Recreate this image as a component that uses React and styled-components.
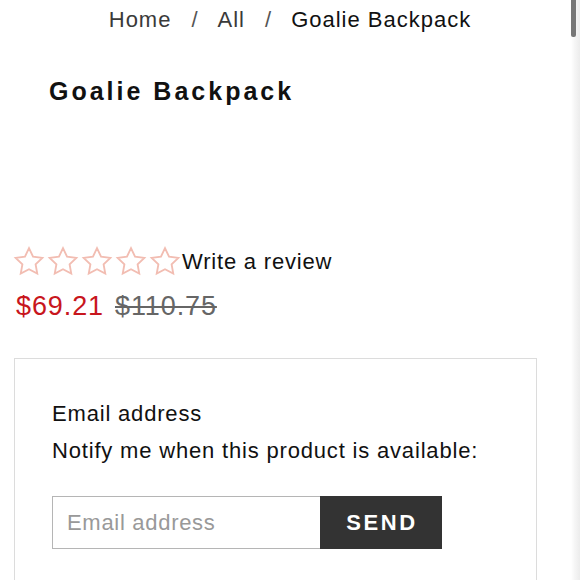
import React from "react";
import styled, { createGlobalStyle } from "styled-components";

const Global = createGlobalStyle`
  html, body { margin: 0; padding: 0; background: #fff; }
  body {
    font-family: "Liberation Sans", Arial, sans-serif;
    color: #111;
    overflow: hidden;
  }
`;

const Page = styled.div`
  width: 580px;
  height: 580px;
  overflow: hidden;
  position: relative;
`;

const Crumbs = styled.nav`
  display: flex;
  justify-content: center;
  align-items: center;
  padding-top: 7px;
  font-size: 22px;
  line-height: 26px;
  letter-spacing: 1px;
`;

const Crumb = styled.span`
  color: ${(p) => (p.$current ? "#111" : "#3a3a3a")};
`;

const Sep = styled.span`
  color: #555;
  margin: 0 19px 0 20px;
`;

const Main = styled.main`
  padding: 0 14px;
  display: flex;
  flex-direction: column;
  align-items: flex-start;
`;

const Title = styled.h1`
  margin: 43px 0 0 35px;
  font-size: 25px;
  line-height: 30px;
  font-weight: 700;
  letter-spacing: 3px;
  color: #111;
`;

const RatingRow = styled.div`
  display: flex;
  align-items: center;
  margin: 139px 0 0 -2px;
`;

const Stars = styled.div`
  display: flex;
`;

const StarSvg = styled.svg`
  width: 34px;
  height: 33px;
  display: block;
`;

const ReviewLink = styled.a`
  font-size: 22px;
  line-height: 26px;
  letter-spacing: 0.8px;
  color: #111;
  text-decoration: none;
`;

const PriceRow = styled.div`
  display: flex;
  gap: 11px;
  margin: 12px 0 0 2px;
  font-size: 27px;
  line-height: 32px;
  letter-spacing: 0.9px;
`;

const Price = styled.span`
  color: ${(p) => (p.$old ? "#666" : "#c8161d")};
  text-decoration: ${(p) => (p.$old ? "line-through" : "none")};
  text-decoration-thickness: 2px;
`;

const NotifyBox = styled.section`
  align-self: stretch;
  margin-top: 36px;
  width: 523px;
  box-sizing: border-box;
  border: 1px solid #dcdcdc;
  padding: 36px 37px 40px;
`;

const Line = styled.p`
  margin: 0;
  font-size: 22px;
  line-height: 37px;
  letter-spacing: 0.82px;
  color: #111;
`;

const Form = styled.form`
  display: flex;
  margin-top: 27px;
  height: 53px;
`;

const EmailInput = styled.input`
  width: 268px;
  box-sizing: border-box;
  border: 1px solid #b5b5b5;
  border-right: none;
  padding: 0 14px;
  font-family: "Liberation Sans", Arial, sans-serif;
  font-size: 22px;
  letter-spacing: 0.7px;
  color: #111;
  outline: none;
  &::placeholder { color: #999; }
`;

const SendButton = styled.button`
  width: 122px;
  border: none;
  background: #333;
  color: #fff;
  font-family: "Liberation Sans", Arial, sans-serif;
  font-size: 22px;
  font-weight: 700;
  letter-spacing: 2.6px;
  padding: 0 0 0 2px;
  cursor: pointer;
`;

const Track = styled.div`
  position: absolute;
  top: 0;
  right: 0;
  width: 9px;
  height: 100%;
  background: linear-gradient(to right, #ffffff, #f6f6f6 40%, #ececec);
`;

const Thumb = styled.div`
  position: absolute;
  top: 0;
  left: 0px;
  width: 5px;
  height: 37px;
  background: #777;
  border-radius: 0 0 2px 2px;
`;

const Star = () => (
  <StarSvg viewBox="0 0 24 24">
    <polygon
      points="12,2.3 14.95,8.5 21.7,9.4 16.8,14.1 18,20.8 12,17.6 6,20.8 7.2,14.1 2.3,9.4 9.05,8.5"
      fill="none"
      stroke="#f2bdb2"
      strokeWidth="1.35"
      strokeLinejoin="miter"
    />
  </StarSvg>
);

export default function App() {
  return (
    <Page>
      <Global />
      <Crumbs>
        <Crumb>Home</Crumb>
        <Sep>/</Sep>
        <Crumb>All</Crumb>
        <Sep>/</Sep>
        <Crumb $current>Goalie Backpack</Crumb>
      </Crumbs>
      <Main>
        <Title>Goalie Backpack</Title>
        <RatingRow>
          <Stars>
            {[0, 1, 2, 3, 4].map((i) => (
              <Star key={i} />
            ))}
          </Stars>
          <ReviewLink href="#">Write a review</ReviewLink>
        </RatingRow>
        <PriceRow>
          <Price>$69.21</Price>
          <Price $old>$110.75</Price>
        </PriceRow>
        <NotifyBox>
          <Line>Email address</Line>
          <Line>Notify me when this product is available:</Line>
          <Form onSubmit={(e) => e.preventDefault()}>
            <EmailInput type="email" placeholder="Email address" />
            <SendButton type="submit">SEND</SendButton>
          </Form>
        </NotifyBox>
      </Main>
      <Track>
        <Thumb />
      </Track>
    </Page>
  );
}
